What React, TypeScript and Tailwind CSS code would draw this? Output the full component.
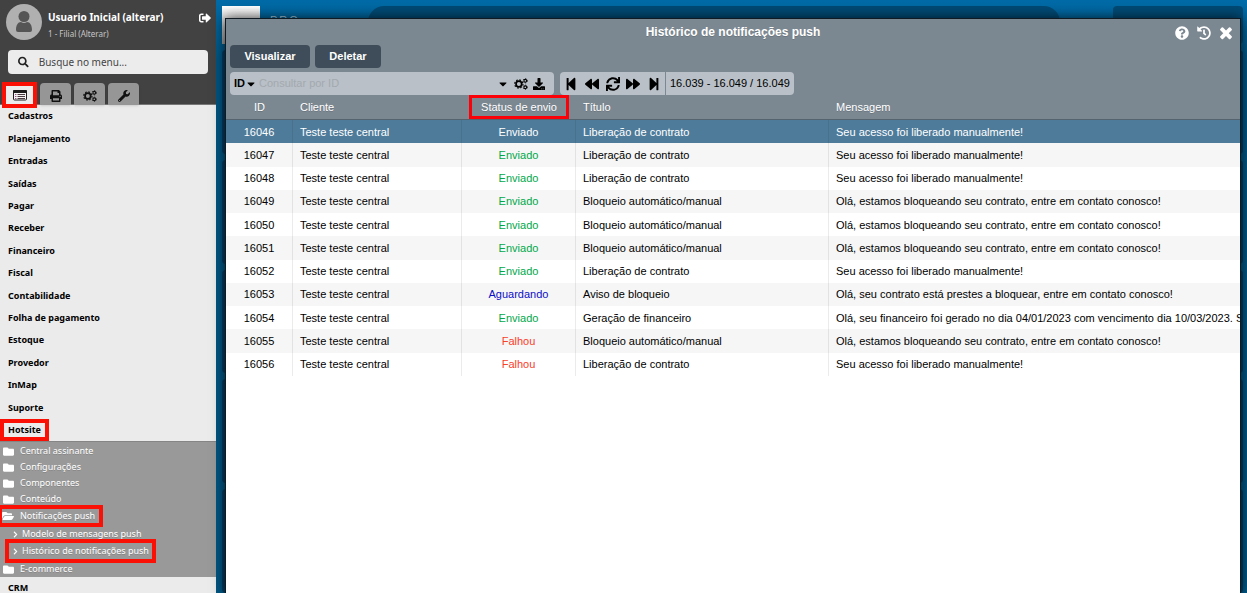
import type { ReactNode } from "react";
import {
  FaBackward,
  FaCaretDown,
  FaChevronRight,
  FaDownload,
  FaFolder,
  FaFolderOpen,
  FaForward,
  FaHistory,
  FaPrint,
  FaQuestionCircle,
  FaSearch,
  FaSignOutAlt,
  FaStepBackward,
  FaStepForward,
  FaSync,
  FaWrench,
} from "react-icons/fa";

const menu = [
  "Cadastros",
  "Planejamento",
  "Entradas",
  "Saídas",
  "Pagar",
  "Receber",
  "Financeiro",
  "Fiscal",
  "Contabilidade",
  "Folha de pagamento",
  "Estoque",
  "Provedor",
  "InMap",
  "Suporte",
  "Hotsite",
];

const folders = ["Central assinante", "Configurações", "Componentes", "Conteúdo"];

const statusColor: Record<string, string> = {
  Enviado: "text-[#00a84a]",
  Aguardando: "text-[#0d0dc8]",
  Falhou: "text-[#f8402a]",
};

const CLIENT = "Teste teste central";
const RELEASED = "Seu acesso foi liberado manualmente!";
const BLOCKING = "Olá, estamos bloqueando seu contrato, entre em contato conosco!";

const rows = [
  { id: 16046, status: "Enviado", title: "Liberação de contrato", message: RELEASED },
  { id: 16047, status: "Enviado", title: "Liberação de contrato", message: RELEASED },
  { id: 16048, status: "Enviado", title: "Liberação de contrato", message: RELEASED },
  { id: 16049, status: "Enviado", title: "Bloqueio automático/manual", message: BLOCKING },
  { id: 16050, status: "Enviado", title: "Bloqueio automático/manual", message: BLOCKING },
  { id: 16051, status: "Enviado", title: "Bloqueio automático/manual", message: BLOCKING },
  { id: 16052, status: "Enviado", title: "Liberação de contrato", message: RELEASED },
  {
    id: 16053,
    status: "Aguardando",
    title: "Aviso de bloqueio",
    message: "Olá, seu contrato está prestes a bloquear, entre em contato conosco!",
  },
  {
    id: 16054,
    status: "Enviado",
    title: "Geração de financeiro",
    message: "Olá, seu financeiro foi gerado no dia 04/01/2023 com vencimento dia 10/03/2023. Seg",
  },
  { id: 16055, status: "Falhou", title: "Bloqueio automático/manual", message: BLOCKING },
  { id: 16056, status: "Falhou", title: "Liberação de contrato", message: RELEASED },
];

function WindowIcon() {
  return (
    <svg viewBox="0 0 14 12" className="h-3 w-3.5" aria-hidden="true">
      <rect x="0.5" y="1.5" width="13" height="9.5" rx="1" fill="#f4f4f4" stroke="#1c1c1c" />
      <path d="M0 2q0-1 1-1h12q1 0 1 1v2H0z" fill="#1c1c1c" />
      <path d="M2 5.5h1.4M2 7.500h1.4M2 9.500h1.4" stroke="#a04a8a" />
      <path d="M4.500 5.500H12M4.500 7.500H12M4.500 9.500H12" stroke="#4a3a40" />
    </svg>
  );
}

function CogsIcon({ className }: { className: string }) {
  return (
    <svg viewBox="0 0 16 14" className={className} fill="none" stroke="currentColor" aria-hidden="true">
      <circle cx="5.500" cy="7" r="3.300" strokeWidth="2" />
      <circle cx="5.500" cy="7" r="4.800" strokeWidth="1.300" strokeDasharray="1.900 1.870" />
      <circle cx="13" cy="3.200" r="1.600" strokeWidth="1.200" />
      <circle cx="13" cy="3.200" r="2.500" strokeWidth="0.900" strokeDasharray="1.300 1.318" />
      <circle cx="13" cy="10.800" r="1.600" strokeWidth="1.200" />
      <circle cx="13" cy="10.800" r="2.500" strokeWidth="0.900" strokeDasharray="1.300 1.318" />
    </svg>
  );
}

function CloseIcon() {
  return (
    <svg viewBox="200 240 1392 1392" className="size-3.5" fill="currentColor" aria-hidden="true">
      <path d="M1490 1322q0 40-28 68l-136 136q-28 28-68 28t-68-28l-294-294-294 294q-28 28-68 28t-68-28l-136-136q-28-28-28-68t28-68l294-294-294-294q-28-28-28-68t28-68l136-136q28-28 68-28t68 28l294 294 294-294q28-28 68-28t68 28l136 136q28 28 28 68t-28 68l-294 294 294 294q28 28 28 68z" />
    </svg>
  );
}

function Tab({ label, active, children }: { label: string; active?: boolean; children: ReactNode }) {
  return (
    <button
      type="button"
      aria-label={label}
      className={
        active
          ? "flex h-[26px] w-[35px] items-center justify-center border-4 border-[#fb1006] bg-[#ececec]"
          : "flex h-[22px] w-[31px] items-center justify-center rounded-t bg-[#969696] pt-1 text-[#111] shadow-sm"
      }
    >
      {children}
    </button>
  );
}

function Sidebar() {
  return (
    <aside className="flex w-[216px] shrink-0 flex-col bg-[#ebebeb] font-['Noto_Sans','Open_Sans',sans-serif] text-[9px] text-black">
      <header className="h-[105px] border-b border-[#777] bg-[#424242]">
        <div className="flex h-[46px] items-start pt-1 pr-[5px] pl-1.5">
          <svg viewBox="0 0 36 36" className="size-9 shrink-0" aria-hidden="true">
            <circle cx="18" cy="18" r="18" fill="#b0b0b0" />
            <circle cx="18" cy="12.500" r="5.500" fill="#555" />
            <path d="M10 26c0-5 2-8 5-8q3 2 6 0c3 0 5 3 5 8q0 2-2 2H12q-2 0-2-2z" fill="#555" />
          </svg>
          <div className="ml-1.5 flex-1 pt-1 whitespace-nowrap">
            <a href="#usuario" className="block text-[10px] leading-[18px] font-bold text-white">
              Usuario Inicial (alterar)
            </a>
            <a href="#filial" className="block text-[8px] leading-4 text-[#c8c8c8]">
              1 - Filial (Alterar)
            </a>
          </div>
          <button type="button" aria-label="Sair" className="mt-2 text-white">
            <FaSignOutAlt className="size-3" />
          </button>
        </div>
        <label className="mx-2 mt-1 flex h-6 items-center gap-2.5 rounded bg-[#ececec] pl-2.5">
          <FaSearch className="size-3 text-[#222]" />
          <input
            type="text"
            aria-label="Busque no menu"
            placeholder="Busque no menu..."
            className="w-full bg-transparent text-[10px] outline-none placeholder:text-[#444]"
          />
        </label>
        <div className="mt-2 flex items-start gap-[3px] pl-0.5">
          <Tab label="Menu" active>
            <WindowIcon />
          </Tab>
          <div className="flex gap-[3px] pt-px">
            <Tab label="Relatórios">
              <FaPrint className="size-3" />
            </Tab>
            <Tab label="Configurações">
              <CogsIcon className="h-3 w-3.5" />
            </Tab>
            <Tab label="Ferramentas">
              <FaWrench className="size-3" />
            </Tab>
          </div>
        </div>
      </header>

      <nav className="flex flex-col">
        <ul className="grid h-[336px] auto-rows-fr">
          {menu.map((item) => (
            <li key={item} className="flex items-center">
              <a
                href="#menu"
                className={
                  item === "Hotsite"
                    ? "border-4 border-[#fb1006] px-1 leading-3.5 font-bold"
                    : "px-2 font-bold"
                }
              >
                {item}
              </a>
            </li>
          ))}
        </ul>
        <div className="border-t border-[#858585] bg-[#999] pt-px text-white text-shadow-2xs">
          <ul>
            {folders.map((item) => (
              <li key={item}>
                <a href="#pasta" className="flex h-4 items-center gap-1.5 pl-[3px]">
                  <FaFolder className="size-[11px]" />
                  {item}
                </a>
              </li>
            ))}
            <li>
              <a
                href="#push"
                className="-my-0.5 flex h-[22px] w-[103px] items-center gap-1.5 border-4 border-l-2 border-[#fb1006] whitespace-nowrap"
              >
                <FaFolderOpen className="size-3 shrink-0" />
                Notificações push
              </a>
              <ul>
                <li>
                  <a href="#modelo" className="flex h-[18px] items-center gap-[3px] pl-3">
                    <FaChevronRight className="size-[7px]" />
                    Modelo de mensagens push
                  </a>
                </li>
                <li>
                  <a
                    href="#historico"
                    className="-mt-1 -mb-0.5 ml-[5px] flex h-6 w-[151px] items-center gap-[3px] border-4 border-[#fb1006] pl-[3px] whitespace-nowrap"
                  >
                    <FaChevronRight className="size-[7px] shrink-0" />
                    Histórico de notificações push
                  </a>
                </li>
              </ul>
            </li>
            <li>
              <a href="#ecommerce" className="flex h-4 items-center gap-1.5 pl-[3px]">
                <FaFolder className="size-[11px]" />
                E-commerce
              </a>
            </li>
          </ul>
        </div>
        <a href="#crm" className="flex h-[22px] items-center px-2 font-bold">
          CRM
        </a>
      </nav>
    </aside>
  );
}

function Toolbar() {
  return (
    <div className="flex h-[23px] items-stretch gap-1.5 pl-1 text-[11px] text-black">
      <div className="flex w-[324px] items-center rounded-sm bg-[#b9c0c7]">
        <button type="button" className="flex items-center pl-1 font-bold">
          ID
          <FaCaretDown className="size-3" />
        </button>
        <input
          type="text"
          aria-label="Consultar por ID"
          placeholder="Consultar por ID"
          className="ml-0.5 min-w-0 flex-1 bg-transparent outline-none placeholder:text-[#a3a9af]"
        />
        <div className="flex items-center gap-[5px] pr-[9px]">
          <button type="button" aria-label="Opções">
            <FaCaretDown className="size-3" />
          </button>
          <button type="button" aria-label="Filtros">
            <CogsIcon className="h-3 w-3.5" />
          </button>
          <button type="button" aria-label="Exportar">
            <FaDownload className="size-3" />
          </button>
        </div>
      </div>
      <div className="flex gap-px">
        <div className="flex w-[105px] items-center justify-between rounded-l-sm bg-[#b9c0c7] px-1">
          <button type="button" aria-label="Primeira página">
            <FaStepBackward className="size-3.5" />
          </button>
          <button type="button" aria-label="Página anterior">
            <FaBackward className="size-3.5" />
          </button>
          <button type="button" aria-label="Atualizar">
            <FaSync className="size-3.5" />
          </button>
          <button type="button" aria-label="Próxima página">
            <FaForward className="size-3.5" />
          </button>
          <button type="button" aria-label="Última página">
            <FaStepForward className="size-3.5" />
          </button>
        </div>
        <span className="flex items-center rounded-r-sm bg-[#b9c0c7] px-1">16.039 - 16.049 / 16.049</span>
      </div>
    </div>
  );
}

function HistoryTable() {
  return (
    <table className="h-[281px] w-full table-fixed border-separate border-spacing-0 text-left text-[11px] leading-4 whitespace-nowrap">
      <colgroup>
        <col className="w-[67px]" />
        <col className="w-[169px]" />
        <col className="w-[114px]" />
        <col className="w-[253px]" />
        <col />
      </colgroup>
      <thead className="bg-[#7b8791] text-white text-shadow-2xs">
        <tr className="h-[25px] *:border-b *:border-[#55636e]">
          <th className="p-0 text-center font-normal">ID</th>
          <th className="px-[7px] py-0 font-normal">Cliente</th>
          <th className="p-0 text-center font-normal">
            <span className="mx-auto block h-6 w-[100px] border-3 border-[#fb0007] leading-[18px]">
              Status de envio
            </span>
          </th>
          <th className="px-[7px] py-0 font-normal">Título</th>
          <th className="px-[7px] py-0 font-normal">Mensagem</th>
        </tr>
      </thead>
      <tbody>
        {rows.map((row, i) => {
          const selected = i === 0;
          return (
            <tr
              key={row.id}
              className={
                selected ? "h-[23px] bg-[#4e7b9a] text-white" : "h-[23px] bg-white text-black even:bg-[#f6f6f6]"
              }
            >
              <td className="border-r border-black/8 p-0 text-center">{row.id}</td>
              <td className="border-r border-black/8 px-[7px] py-0">{CLIENT}</td>
              <td
                className={`border-r border-black/8 p-0 text-center ${selected ? "text-white" : statusColor[row.status]}`}
              >
                {row.status}
              </td>
              <td className="border-r border-black/8 px-[7px] py-0">{row.title}</td>
              <td className="overflow-hidden py-0 pr-0 pl-[7px]">{row.message}</td>
            </tr>
          );
        })}
      </tbody>
    </table>
  );
}

function HistoryWindow() {
  return (
    <section className="relative z-10 mt-[18px] mr-1.5 ml-[9px] flex flex-1 flex-col border-x border-t border-[#101a22] bg-white shadow-[0_0_12px_rgba(0,0,0,0.7)]">
      <header className="bg-[#7b8791] text-white">
        <div className="grid h-6 grid-cols-[1fr_auto_1fr] items-center pt-0.5">
          <h1 className="col-start-2 text-xs font-bold text-shadow-2xs">Histórico de notificações push</h1>
          <div className="flex items-center justify-end gap-2 pt-0.5 pr-[7px]">
            <button type="button" aria-label="Ajuda">
              <FaQuestionCircle className="size-3.5" />
            </button>
            <button type="button" aria-label="Histórico">
              <FaHistory className="size-3.5" />
            </button>
            <button type="button" aria-label="Fechar">
              <CloseIcon />
            </button>
          </div>
        </div>
        <div className="flex gap-[5px] pt-0.5 pb-1 pl-1 text-[11px] font-bold">
          <button type="button" className="h-[23px] w-20 rounded-sm bg-[#3e4d59]">
            Visualizar
          </button>
          <button type="button" className="h-[23px] w-[66px] rounded-sm bg-[#3e4d59]">
            Deletar
          </button>
        </div>
        <Toolbar />
      </header>
      <HistoryTable />
    </section>
  );
}

function Desktop() {
  return (
    <div className="absolute top-1.5 right-1 bottom-0 left-1.5 flex flex-col gap-1.5">
      <div className="flex h-[38px] shrink-0 items-start">
        <div className="size-[38px] bg-linear-to-b from-white to-[#999]" />
        <span className="mr-[68px] ml-2.5 pt-1.5 text-[11px] tracking-[2px] text-[#a9c8da]">PRO</span>
        <div className="mr-[53px] h-full flex-1 rounded-2xl bg-[#004a75]" />
        <div className="h-full w-[130px] rounded bg-[#004a75]" />
      </div>
      <div className="grid flex-1 auto-rows-fr gap-1.5 *:rounded *:bg-[#003c61]">
        <div />
        <div />
        <div />
        <div />
        <div />
      </div>
    </div>
  );
}

export default function App() {
  return (
    <div className="flex h-screen overflow-hidden font-['Liberation_Sans',sans-serif]">
      <Sidebar />
      <main className="relative flex min-w-0 flex-1 bg-[#005582] bg-linear-to-b from-[#006ba8] to-[#005582] to-10%">
        <Desktop />
        <HistoryWindow />
      </main>
    </div>
  );
}
